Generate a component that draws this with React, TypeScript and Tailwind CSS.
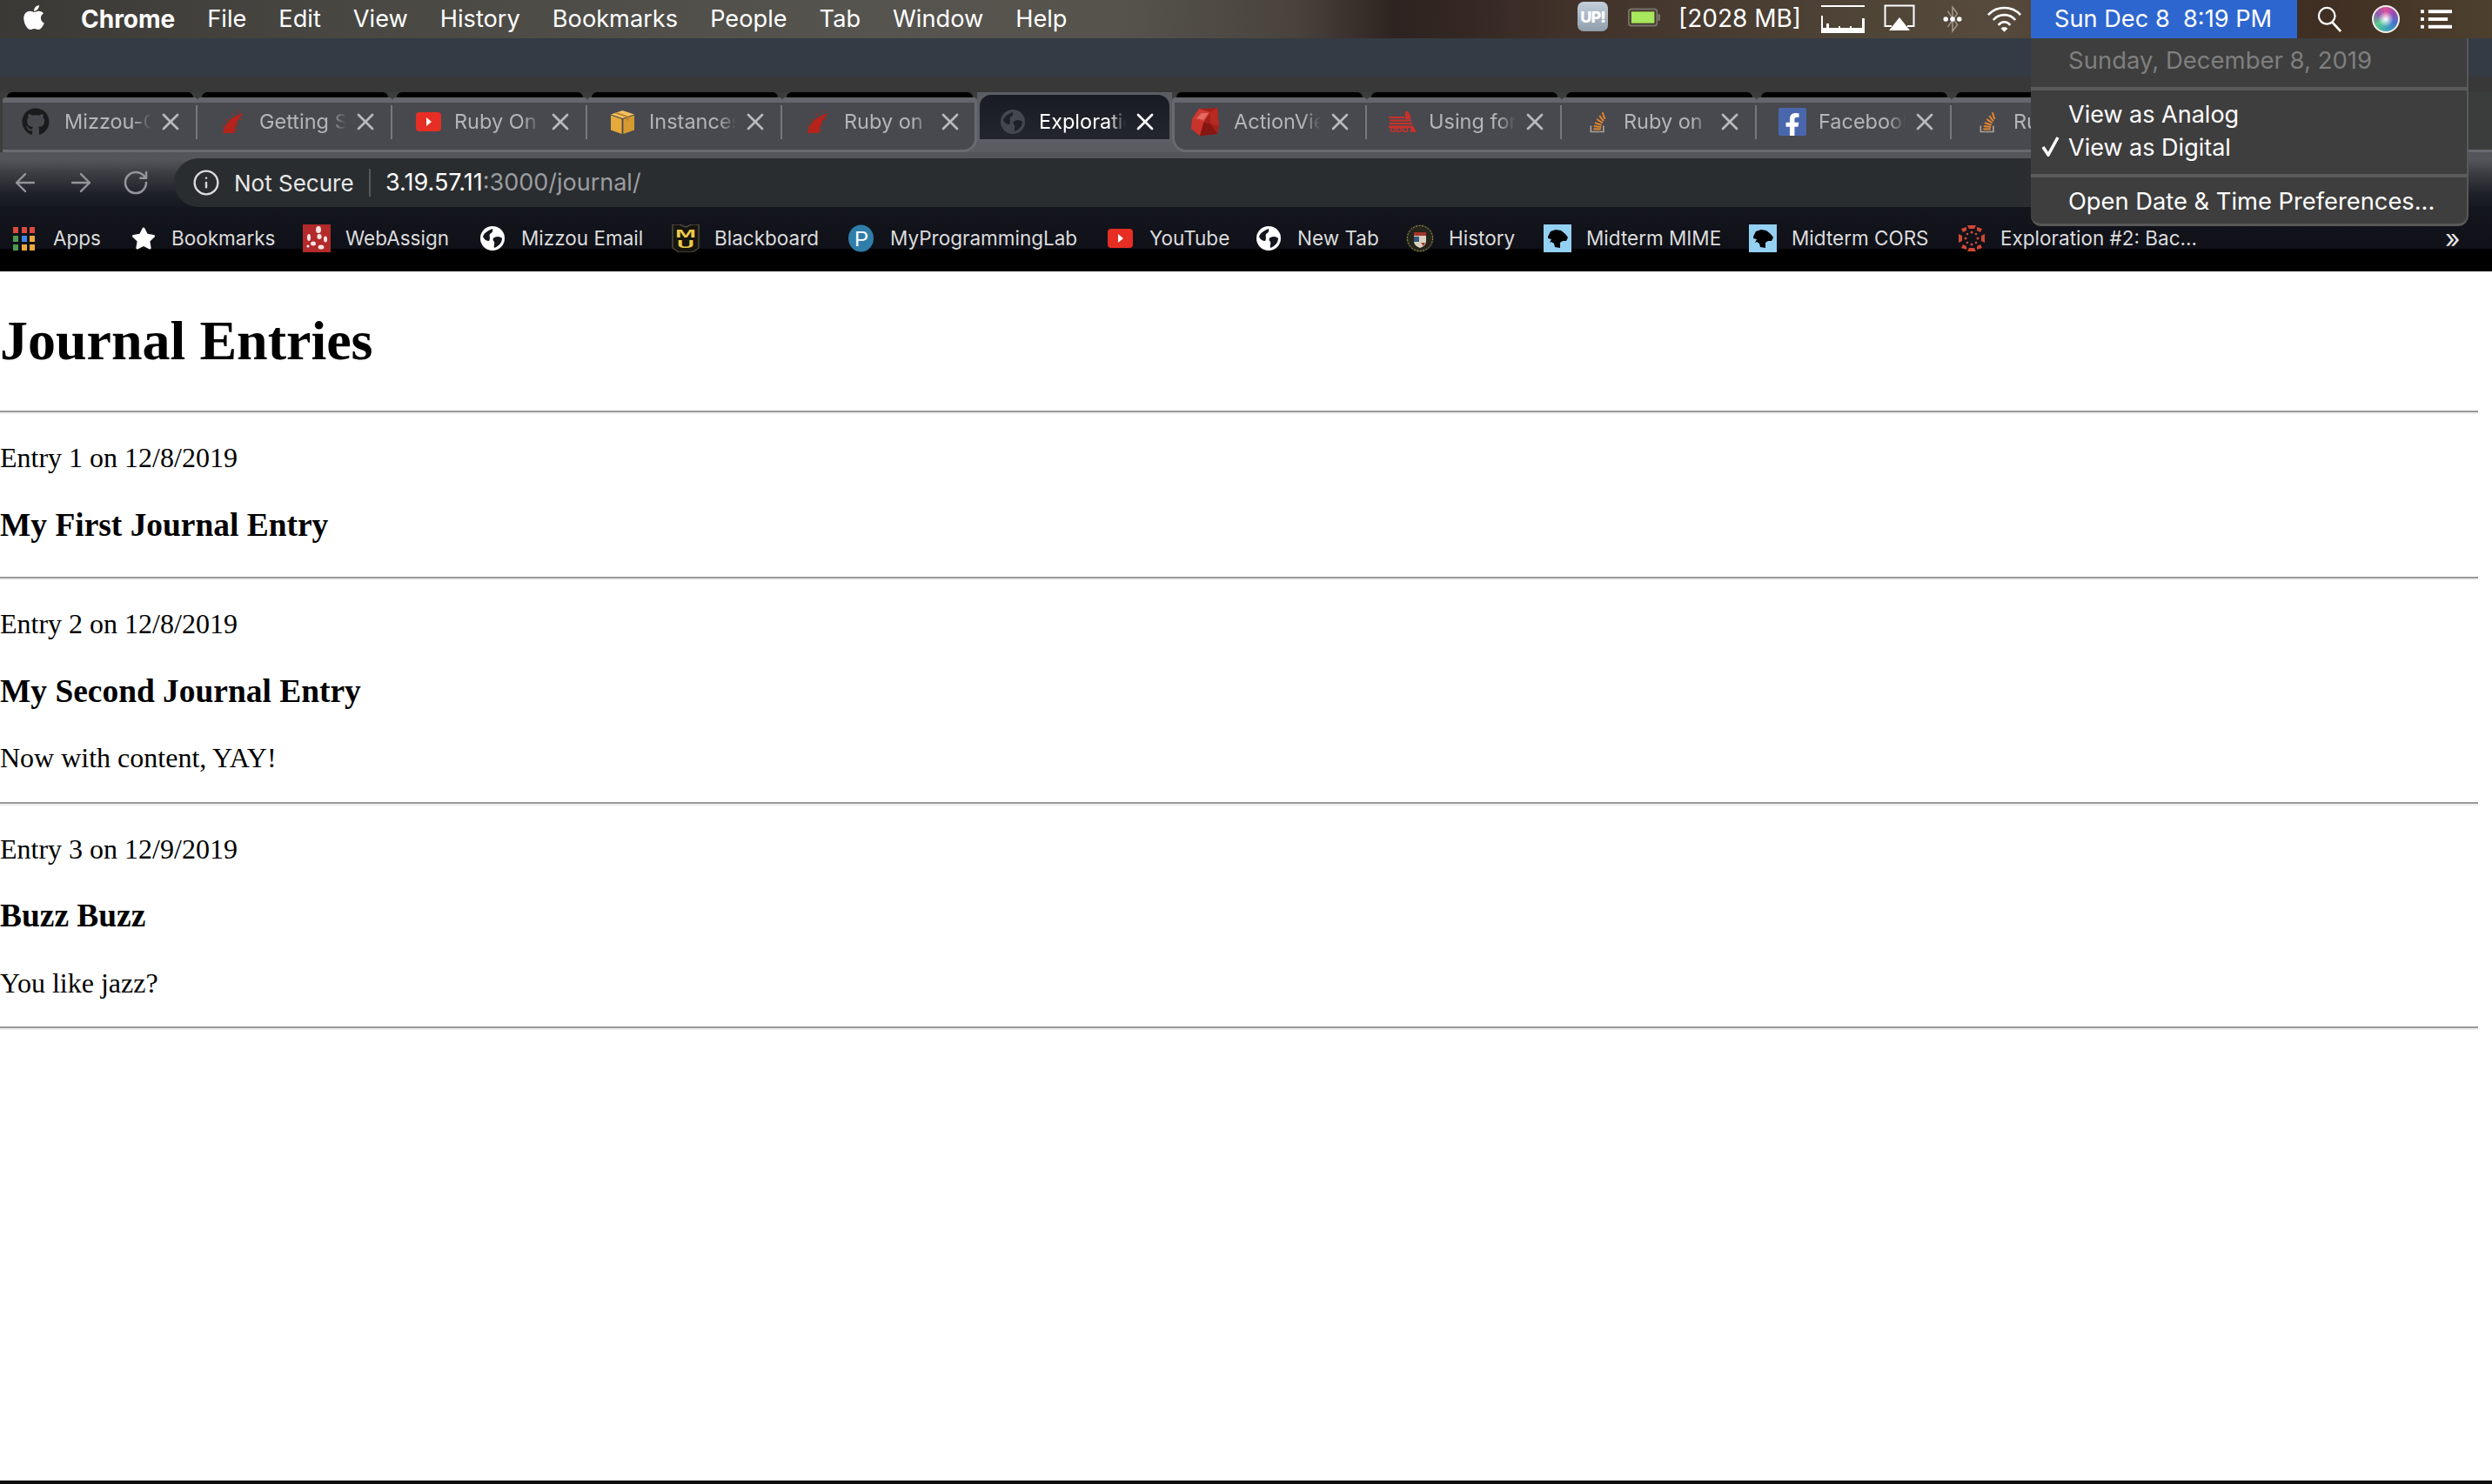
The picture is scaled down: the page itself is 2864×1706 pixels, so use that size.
import React from "react";
import { ArrowLeft, ArrowRight, RotateCw, Info, X } from "lucide-react";
import { FaApple, FaGithub, FaFacebookF, FaStar } from "react-icons/fa";

function RailsIcon() {
  return (
    <svg width="29" height="27" viewBox="0 0 32 30">
      <path d="M2 29 C4 18 12 7 30 3 C23 8 18 17 17 29 Z" fill="#b5231a" />
      <circle cx="3" cy="20" r="1.2" fill="#b5231a" />
      <circle cx="8" cy="12" r="1.2" fill="#b5231a" />
      <circle cx="15" cy="5" r="1.2" fill="#b5231a" />
      <circle cx="22" cy="1.5" r="1" fill="#b5231a" />
      <circle cx="21" cy="18" r="1" fill="#b5231a" />
      <circle cx="19" cy="25" r="1" fill="#b5231a" />
      <circle cx="25" cy="11" r="1" fill="#b5231a" />
    </svg>
  );
}

function YoutubeIcon() {
  return (
    <svg width="29" height="22" viewBox="0 0 29 22">
      <rect width="29" height="22" rx="4" fill="#e62e24" />
      <path d="M12 6 L18 11 L12 16 Z" fill="#fff" />
    </svg>
  );
}

function BoxIcon() {
  return (
    <svg width="31" height="27" viewBox="0 0 32 30" className="-ml-[2px]">
      <path d="M16 0 L31 5 L16 10 L1 5 Z" fill="#f2c063" />
      <path d="M1 6 L15 11 L15 30 L1 25 Z" fill="#e5a93c" />
      <path d="M31 6 L17 11 L17 30 L31 25 Z" fill="#d69a2f" />
      <path d="M9 2.5 L24 7.5 L24 12 L21 13 L21 8.5 L6 3.6 Z" fill="#b9812a" />
    </svg>
  );
}

function GlobeIcon({ fill, ink }: { fill: string; ink: string }) {
  return (
    <svg width="28" height="28" viewBox="0 0 28 28">
      <circle cx="14" cy="14" r="14" fill={fill} />
      <path d="M3 12 C5 7 9 5 14 3 C15 6 13 8 11 9 C10 12 12 14 10 17 C7 17 4 15 3 12 Z" fill={ink} />
      <path d="M16 13 C20 11 23 12 25 14 C25 19 21 23 16 25 C15 22 17 20 16 18 C14 16 14 14 16 13 Z" fill={ink} />
    </svg>
  );
}

function GemIcon() {
  return (
    <svg width="32" height="32" viewBox="0 0 32 32" className="-ml-[7px]">
      <path d="M9 1 L30 0 L32 21 L30 30 L10 32 L0 24 L1 13 Z" fill="#a3201a" />
      <path d="M9 1 L22 5 L14 17 L1 13 Z" fill="#cf3a32" />
      <path d="M22 5 L30 0 L32 21 L22 18 Z" fill="#b62a22" />
      <path d="M14 17 L22 18 L30 30 L10 32 Z" fill="#861611" />
      <path d="M1 13 L14 17 L10 32 L0 24 Z" fill="#c8342c" />
      <path d="M12 6 L20 6 L14 14 L6 12 Z" fill="#e46a62" />
    </svg>
  );
}

function TrainIcon() {
  return (
    <svg width="32" height="24" viewBox="0 0 32 24" fill="#c9302a">
      <path d="M19 0 L23 0 L23 3 L25 3 L25 9 L19 9 Z" />
      <rect x="0" y="6" width="18" height="2" />
      <rect x="1" y="9.5" width="25" height="2" />
      <rect x="1" y="13" width="26" height="2" />
      <path d="M0 16.5 L28 16.5 L32 24 L25 24 L25 19 L0 19 Z" />
      <circle cx="5" cy="21" r="2.6" fill="none" stroke="#c9302a" strokeWidth="1.6" />
      <circle cx="12" cy="21" r="2.6" fill="none" stroke="#c9302a" strokeWidth="1.6" />
      <circle cx="19" cy="21" r="2.6" fill="none" stroke="#c9302a" strokeWidth="1.6" />
    </svg>
  );
}

function StackIcon() {
  return (
    <svg width="22" height="26" viewBox="0 0 24 34">
      <path d="M2 23 V32 H21 V23" fill="none" stroke="#a8a29a" strokeWidth="2.2" />
      <g stroke="#e8862e" strokeWidth="2.6">
        <line x1="6" y1="28" x2="17" y2="28" />
        <line x1="6.5" y1="23.5" x2="17.5" y2="25" />
        <line x1="8" y1="18.5" x2="18" y2="22" />
        <line x1="11" y1="13" x2="19.5" y2="19" />
        <line x1="15" y1="8" x2="21" y2="16" />
        <line x1="19.5" y1="3" x2="23" y2="13" />
      </g>
    </svg>
  );
}

function FacebookIcon() {
  return (
    <div className="w-[32px] h-[32px] rounded-[2px] bg-[#4a67ad] flex items-end justify-end overflow-hidden pr-[2px]">
      <FaFacebookF size={28} color="#fff" className="-mb-[2px]" />
    </div>
  );
}

function AppsIcon() {
  const colors = ["#d94b3f", "#d94b3f", "#d94b3f", "#4f9a50", "#3f86e8", "#eba93a", "#4f9a50", "#eba93a", "#eba93a"];
  return (
    <div className="w-[26px] h-[27px] grid grid-cols-3 gap-[3px]">
      {colors.map((c, i) => (
        <div key={i} className="w-[6px] h-[7px]" style={{ background: c }} />
      ))}
    </div>
  );
}

function WebAssignIcon() {
  return (
    <svg width="32" height="32" viewBox="0 0 32 32">
      <rect width="32" height="32" fill="#b32a2a" />
      <g fill="#f5e5e5">
        <ellipse cx="18" cy="6" rx="3" ry="4" />
        <ellipse cx="19" cy="14" rx="2.6" ry="3" />
        <ellipse cx="7" cy="15" rx="2" ry="4" />
        <ellipse cx="26" cy="17" rx="2" ry="3.5" />
        <ellipse cx="12" cy="22" rx="3" ry="2.5" />
        <ellipse cx="21" cy="26" rx="3.4" ry="2.6" />
        <ellipse cx="6" cy="25" rx="1.6" ry="1.6" />
      </g>
    </svg>
  );
}

function MizzouIcon() {
  return (
    <svg width="32" height="32" viewBox="0 0 32 32">
      <path d="M1 0 H9 L16 3 L23 0 H31 V27 L24 32 H8 L1 27 Z" fill="#17150d" stroke="#6a675a" strokeWidth="1" />
      <text x="4" y="15" textLength="24" lengthAdjust="spacingAndGlyphs" fontSize="13" fontWeight="800" fontFamily="Liberation Sans" fill="#eccb4b">M</text>
      <text x="6" y="27" textLength="20" lengthAdjust="spacingAndGlyphs" fontSize="13" fontWeight="800" fontFamily="Liberation Sans" fill="#eccb4b">U</text>
    </svg>
  );
}

function PearsonIcon() {
  return (
    <svg width="29" height="32" viewBox="0 0 30 32">
      <ellipse cx="15" cy="16" rx="15" ry="16" fill="#2f7ea9" />
      <text x="15.5" y="25" textAnchor="middle" fontSize="25" fontFamily="Liberation Sans" fill="#fff">P</text>
    </svg>
  );
}

function SealIcon() {
  return (
    <svg width="32" height="32" viewBox="0 0 32 32">
      <ellipse cx="16" cy="16" rx="16" ry="16" fill="#26251a" />
      <ellipse cx="16" cy="16" rx="14.5" ry="14.5" fill="none" stroke="#a69a64" strokeWidth="1" strokeDasharray="2 1.5" />
      <path d="M9 9 H23 V19 C23 24 19 26 16 27 C13 26 9 24 9 19 Z" fill="#d9d2c2" />
      <rect x="9" y="9" width="14" height="4" fill="#a3362c" />
      <rect x="9" y="14" width="6" height="6" fill="#37557a" />
      <path d="M17 21 H22 L20 25 Z" fill="#a3362c" />
    </svg>
  );
}

function LionIcon() {
  return (
    <svg width="32" height="32" viewBox="0 0 32 32">
      <rect width="32" height="32" fill="#94d0f2" />
      <path d="M5 14 L8 8 L14 6 L20 7 L25 11 L28 15 L26 19 L22 19 L19 21 L19 27 L13 26 L12 22 L9 20 L7 21 L9 17 L5 16 Z" fill="#000" />
    </svg>
  );
}

function CanvasIcon() {
  return (
    <svg width="32" height="32" viewBox="0 0 32 32" fill="#d24836">
      <path d="M11 1 H21 L19 5 H13 Z" />
      <path d="M11 31 H21 L19 27 H13 Z" />
      <path d="M1 11 V21 L5 19 V13 Z" />
      <path d="M31 11 V21 L27 19 V13 Z" />
      <path d="M4 5 L10 3 L10 7 L6 9 Z" />
      <path d="M28 5 L22 3 L22 7 L26 9 Z" />
      <path d="M4 27 L10 29 L10 25 L6 23 Z" />
      <path d="M28 27 L22 29 L22 25 L26 23 Z" />
      <circle cx="16" cy="9" r="1.5" />
      <circle cx="16" cy="23" r="1.5" />
      <circle cx="9" cy="16" r="1.5" />
      <circle cx="23" cy="16" r="1.5" />
      <circle cx="11" cy="11" r="1.3" />
      <circle cx="21" cy="11" r="1.3" />
      <circle cx="11" cy="21" r="1.3" />
      <circle cx="21" cy="21" r="1.3" />
    </svg>
  );
}

const tabs = [
  { title: "Mizzou-CS", icon: <FaGithub size={32} color="#1b1b1e" className="-ml-[7px]" /> },
  { title: "Getting Started", icon: <RailsIcon /> },
  { title: "Ruby On Rails", icon: <YoutubeIcon /> },
  { title: "Instances", icon: <BoxIcon /> },
  { title: "Ruby on Rails", icon: <RailsIcon />, beforeActive: true },
  { title: "Exploration", icon: <GlobeIcon fill="#44474e" ink="#1e2129" />, active: true },
  { title: "ActionView", icon: <GemIcon />, afterActive: true },
  { title: "Using form", icon: <TrainIcon /> },
  { title: "Ruby on Rails", icon: <StackIcon /> },
  { title: "Facebook", icon: <FacebookIcon /> },
  { title: "Ruby on Rails", icon: <StackIcon /> },
];

// item = distance to the next icon, slot = distance from icon to label
const bookmarks = [
  { label: "Apps", icon: <AppsIcon />, item: "w-[136px]", slot: "w-[46px]" },
  { label: "Bookmarks", icon: <FaStar size={28} color="#fff" />, item: "w-[197px]", slot: "w-[46px]" },
  { label: "WebAssign", icon: <WebAssignIcon />, item: "w-[204px]", slot: "w-[49px]" },
  { label: "Mizzou Email", icon: <GlobeIcon fill="#fff" ink="#14161d" />, item: "w-[220px]", slot: "w-[47px]" },
  { label: "Blackboard", icon: <MizzouIcon />, item: "w-[203px]", slot: "w-[49px]" },
  { label: "MyProgrammingLab", icon: <PearsonIcon />, item: "w-[298px]", slot: "w-[48px]" },
  { label: "YouTube", icon: <YoutubeIcon />, item: "w-[171px]", slot: "w-[48px]" },
  { label: "New Tab", icon: <GlobeIcon fill="#fff" ink="#14161d" />, item: "w-[172px]", slot: "w-[47px]" },
  { label: "History", icon: <SealIcon />, item: "w-[158px]", slot: "w-[49px]" },
  { label: "Midterm MIME", icon: <LionIcon />, item: "w-[236px]", slot: "w-[49px]" },
  { label: "Midterm CORS", icon: <LionIcon />, item: "w-[240px]", slot: "w-[49px]" },
  { label: "Exploration #2: Bac...", icon: <CanvasIcon />, item: "w-[300px]", slot: "w-[49px]" },
];

function MenuBar() {
  const items = ["File", "Edit", "View", "History", "Bookmarks", "People", "Tab", "Window", "Help"];
  return (
    <div className="h-[44px] shrink-0 flex items-center text-white text-[27.2px] bg-[linear-gradient(90deg,#3b3935_0%,#4a4843_15%,#56544e_35%,#55534c_45%,#4a433d_52%,#2e2320_56%,#352823_59%,#41322a_63%,#4f4537_75%,#564a3c_80%,#3f2e22_93%,#4e402e_100%)]">
      <FaApple size={32} className="ml-[23px] -mt-[4px]" />
      <span className="ml-[38px] font-bold text-[28px]">Chrome</span>
      {items.map((m) => (
        <span key={m} className="ml-[37px]">{m}</span>
      ))}

      <div className="ml-auto mr-[46px] flex items-center">
        <div className="w-[35px] h-[34px] -mt-[6px] rounded-[7px] bg-[linear-gradient(#c3d0dc,#8f9dab)] flex items-center justify-center text-[18px] font-extrabold tracking-[-1px]">UP!</div>
        <svg width="38" height="22" viewBox="0 0 40 22" className="ml-[23px] -mt-[4px]">
          <rect x="1" y="1" width="34" height="20" rx="3" fill="none" stroke="#77736a" strokeWidth="2" />
          <rect x="4" y="4" width="28" height="14" fill="#a8e85c" />
          <rect x="36" y="7" width="3" height="8" fill="#77736a" />
        </svg>
        <span className="ml-[20px] w-[139px] whitespace-nowrap -mt-[3px] text-[28px]">[2028 MB]</span>
        <svg width="50" height="32" viewBox="0 0 50 32" className="ml-[25px]" fill="#fff">
          <rect y="0" width="50" height="2" />
          <path d="M0 12 H2 V26 H6 V21 H9 V26 H20 V24 H22 V26 H33 V24 H35 V26 H47 V15 H50 V32 H0 Z" />
        </svg>
        <svg width="36" height="34" viewBox="0 0 36 34" className="ml-[22px]">
          <path d="M9 25 H1.5 V1.5 H34.5 V25 H27" fill="none" stroke="#fff" strokeWidth="2" />
          <path d="M18 15 L30 30 H6 Z" fill="#fff" />
        </svg>
        <svg width="22" height="34" viewBox="0 0 24 34" className="ml-[32px]">
          <path d="M6 7 L18 24 L12 32 V2 L18 10 L6 27" fill="none" stroke="#a19b90" strokeWidth="1.6" />
          <circle cx="3.5" cy="17" r="3" fill="#fff" />
          <circle cx="12" cy="17" r="3" fill="#fff" />
          <circle cx="20.5" cy="17" r="3" fill="#fff" />
        </svg>
        <svg width="41" height="32" viewBox="0 0 42 32" className="ml-[28px]" fill="none" stroke="#fff" strokeWidth="2.6">
          <path d="M2 11 C12 0 30 0 40 11" />
          <path d="M8 17 C15 9 27 9 34 17" />
          <path d="M14 23 C18 18 24 18 28 23" />
          <path d="M17 27 L21 31 L25 27 C23 25 19 25 17 27 Z" fill="#fff" stroke="none" />
        </svg>
        <div className="ml-[10px] w-[306px] h-[44px] bg-[#2d66cf] flex items-center pl-[27px] whitespace-pre">Sun Dec 8  8:19 PM</div>
        <svg width="28" height="30" viewBox="0 0 30 32" className="ml-[23px]" fill="none" stroke="#fff">
          <circle cx="12" cy="12" r="10" strokeWidth="2.4" />
          <path d="M18.5 19.5 L29 31" strokeWidth="2.8" />
        </svg>
        <div className="ml-[35px] w-[32px] h-[32px] rounded-full border-2 border-[#f4efe6] bg-[radial-gradient(circle,#ffffff_0%,#ffffff00_45%),conic-gradient(#d84e9c,#8a4fb8,#3f79c9,#3fa7b8,#5bc98f,#8e5fb0,#d84e9c)]" />
        <svg width="36" height="22" viewBox="0 0 37 22" className="ml-[24px]" fill="#fff">
          <rect x="0" y="0" width="4" height="4" />
          <rect x="0" y="9" width="4" height="4" />
          <rect x="0" y="18" width="4" height="4" />
          <rect x="9" y="0" width="28" height="4" />
          <rect x="9" y="9" width="23" height="4" />
          <rect x="9" y="18" width="28" height="4" />
        </svg>
      </div>
    </div>
  );
}

function TabStrip() {
  return (
    <div className="h-[94px] shrink-0 flex flex-col bg-[#3a3d3c]">
      <div className="h-[18px] bg-[#383838]" />
      <div className="h-[69px] flex pl-[3px] overflow-hidden">
        {tabs.map((t, i) =>
          t.active ? (
            <div key={i} className="w-[224px] shrink-0 flex flex-col bg-[#5b5c61]">
              <div className="h-[57px] rounded-t-[16px] border-[3px] border-[#5c5e65] bg-[linear-gradient(#181b23,#23262d)] flex items-center pl-[22px] pt-[11px] text-white text-[23.5px]">
                <div className="w-[32px] flex justify-center">{t.icon}</div>
                <div className="ml-[14px] w-[100px] whitespace-nowrap overflow-hidden [mask-image:linear-gradient(to_right,black_80%,transparent)]">{t.title}</div>
                <X size={32} className="ml-[6px]" color="#fff" />
              </div>
            </div>
          ) : (
            <div key={i} className="w-[224px] shrink-0 flex flex-col">
              <div className="h-[6px] mx-[5px] bg-black rounded-t-[14px]" />
              <div className="h-[6px] bg-[#66676c] rounded-t-[4px]" />
              <div className="h-[57px] bg-[#5b5c61]">
                <div
                  className={
                    t.beforeActive
                      ? "h-[57px] border-b-[3px] border-[#696a6f] bg-[#48494e] flex items-center pl-[25px] pb-[10px] text-[#b4b5b8] text-[23.5px] border-r-[3px] rounded-br-[16px]"
                      : t.afterActive
                      ? "h-[57px] border-b-[3px] border-[#696a6f] bg-[#48494e] flex items-center pl-[22px] pb-[10px] text-[#b4b5b8] text-[23.5px] border-l-[3px] rounded-bl-[16px]"
                      : "h-[57px] border-b-[3px] border-[#696a6f] bg-[#48494e] flex items-center pl-[25px] pb-[10px] text-[#b4b5b8] text-[23.5px]"
                  }
                >
                  <div className="w-[32px] flex justify-center">{t.icon}</div>
                  <div className="ml-[14px] w-[100px] whitespace-nowrap overflow-hidden [mask-image:linear-gradient(to_right,black_80%,transparent)]">{t.title}</div>
                  <X size={32} className="ml-[6px]" color="#b9babd" />
                  {!t.beforeActive && <div className="ml-auto w-[2px] h-[39px] self-start mt-[3px] bg-[#77787c]" />}
                </div>
              </div>
            </div>
          )
        )}
        <div className="flex-1 border-b-[3px] border-[#696a6f]" />
      </div>
      <div className="h-[7px] bg-[#54555a]" />
    </div>
  );
}

function Toolbar() {
  return (
    <div className="h-[56px] shrink-0 flex items-center pl-[12px] pr-[100px] bg-[linear-gradient(#55575c,#3c3e44_30%,#1e2027_75%,#171920)] text-[26px]">
      <ArrowLeft size={34} color="#94959a" strokeWidth={1.7} />
      <ArrowRight size={34} color="#94959a" strokeWidth={1.7} className="ml-[30px]" />
      <RotateCw size={32} color="#94959a" strokeWidth={1.9} className="ml-[30px]" />
      <div className="ml-[28px] flex-1 h-[56px] bg-[#2a2d30] rounded-l-[28px] flex items-center pl-[21px] whitespace-nowrap">
        <Info size={32} color="#dcdcdc" strokeWidth={1.8} />
        <span className="ml-[16px] w-[140px] text-[#e8e8e8]">Not Secure</span>
        <div className="ml-[15px] w-[2px] h-[32px] bg-[#55585c]" />
        <span className="ml-[17px] text-white text-[27px]">3.19.57.11</span>
        <span className="text-[#9b9da0] text-[27px]">:3000/journal/</span>
      </div>
    </div>
  );
}

function BookmarksBar() {
  return (
    <div className="relative h-[74px] shrink-0 flex items-start pt-[20px] pl-[15px] text-[#dcdcde] text-[22.5px] bg-[linear-gradient(#14161d_0,#101118_48px,#000_48px)]">
      {bookmarks.map((b) => (
        <div key={b.label} className={`flex items-center h-[32px] shrink-0 ${b.item}`}>
          <div className={`flex items-center shrink-0 ${b.slot}`}>{b.icon}</div>
          <span className="whitespace-nowrap">{b.label}</span>
        </div>
      ))}
      <span className="absolute left-[2810px] top-[14px] text-[30px] text-[#e6e6e8]">»</span>
    </div>
  );
}

function ClockMenu() {
  return (
    <div className="absolute left-[2334px] top-[44px] w-[503px] h-[216px] bg-[#3e3e3e] border-r-2 border-b-[3px] border-[#585858] rounded-b-[12px] text-white text-[27px] flex flex-col">
      <div className="h-[56px] pl-[43px] pb-[4px] flex items-center text-[#7f7f7f] text-[27.5px]">Sunday, December 8, 2019</div>
      <div className="h-[4px] bg-[#5a5a5a]" />
      <div className="h-[96px] pl-[43px] pb-[2px] flex flex-col justify-center relative">
        <div className="h-[38px] flex items-center">View as Analog</div>
        <div className="h-[38px] flex items-center">View as Digital</div>
        <svg width="24" height="24" viewBox="0 0 24 24" className="absolute left-[11px] top-[52px]">
          <path d="M3 13 L9 22 L20 2" fill="none" stroke="#fff" strokeWidth="3.6" />
        </svg>
      </div>
      <div className="h-[4px] bg-[#5a5a5a]" />
      <div className="flex-1 pl-[43px] pt-[3px] flex items-center text-[27.3px]">Open Date &amp; Time Preferences...</div>
    </div>
  );
}

function JournalPage() {
  const rule = "h-[4px] my-[16px] border-t-2 border-[#9a9a9a] bg-[#eeeeee]";
  const title = "text-[37.44px] leading-[1.15] font-bold my-[37.44px]";
  const para = "text-[32px] leading-[36.4px] my-[32px]";
  return (
    <div className="flex-1 w-[2848px] bg-white text-black font-['Liberation_Serif',serif] flow-root">
      <h1 className="text-[64px] leading-[1.15] font-bold mt-[42.88px] mb-[44px]">Journal Entries</h1>
      <hr className={rule} />
      <p className={para}>Entry 1 on 12/8/2019</p>
      <h3 className={title}>My First Journal Entry</h3>
      <hr className={rule} />
      <p className={para}>Entry 2 on 12/8/2019</p>
      <h3 className={title}>My Second Journal Entry</h3>
      <p className={para}>Now with content, YAY!</p>
      <hr className={rule} />
      <p className={para}>Entry 3 on 12/9/2019</p>
      <h3 className={title}>Buzz Buzz</h3>
      <p className={para}>You like jazz?</p>
      <hr className={rule} />
    </div>
  );
}

export default function App() {
  return (
    <div className="relative w-[2864px] h-[1706px] overflow-hidden bg-white flex flex-col font-['Inter',sans-serif]">
      <MenuBar />
      <div className="h-[44px] shrink-0 bg-[#343b45]" />
      <TabStrip />
      <Toolbar />
      <BookmarksBar />
      <JournalPage />
      <div className="h-[4px] shrink-0 bg-[#0d0d0d]" />
      <ClockMenu />
    </div>
  );
}
